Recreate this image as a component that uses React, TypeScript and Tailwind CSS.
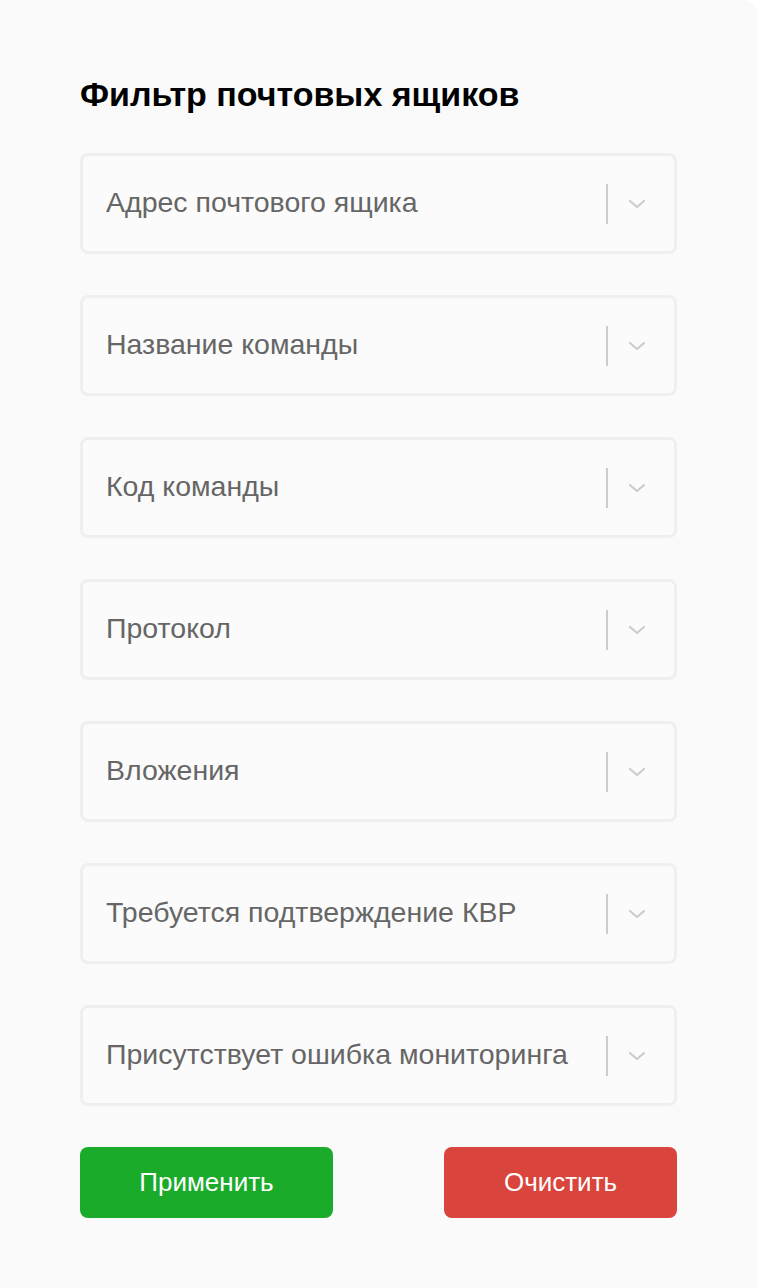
const fields = [
  "Адрес почтового ящика",
  "Название команды",
  "Код команды",
  "Протокол",
  "Вложения",
  "Требуется подтверждение КВР",
  "Присутствует ошибка мониторинга",
];

const Chevron = () => (
  <svg width="18" height="10" viewBox="0 0 18 10" fill="none">
    <path d="M2 2l7 6 7-6" stroke="#cccccc" strokeWidth="2.2" strokeLinecap="round" strokeLinejoin="round" />
  </svg>
);

const FilterSelect = ({ label }: { label: string }) => (
  <div className="flex h-[101px] items-center rounded-[8px] border-[3px] border-[#efefef] bg-[#fbfbfb] pl-[23px] pr-[28px]">
    <span className="flex-1 truncate pb-[3px] text-[28.5px] leading-[34px] text-[#666666]">{label}</span>
    <div className="ml-[16px] h-[40px] w-[2px] bg-[#cccccc]" />
    <div className="ml-[20px] flex items-center">
      <Chevron />
    </div>
  </div>
);

export default function App() {
  return (
    <div className="min-h-[1288px] w-[760px] bg-white" style={{ fontFamily: '"Liberation Sans", Arial, sans-serif' }}>
      <div className="min-h-[1288px] w-[757px] rounded-tr-[14px] bg-[#fafafa] px-[80px] pt-[74px]">
        <h1 className="text-[34px] font-bold leading-[40px] text-black">Фильтр почтовых ящиков</h1>
        <div className="mt-[39px] flex flex-col gap-[41px]">
          {fields.map((f) => (
            <FilterSelect key={f} label={f} />
          ))}
        </div>
        <div className="mt-[41px] flex justify-between">
          <button className="h-[71px] w-[253px] rounded-[8px] bg-[#1aab2b] text-[26px] text-white">Применить</button>
          <button className="h-[71px] w-[233px] rounded-[8px] bg-[#d9443c] text-[26px] text-white">Очистить</button>
        </div>
      </div>
    </div>
  );
}
